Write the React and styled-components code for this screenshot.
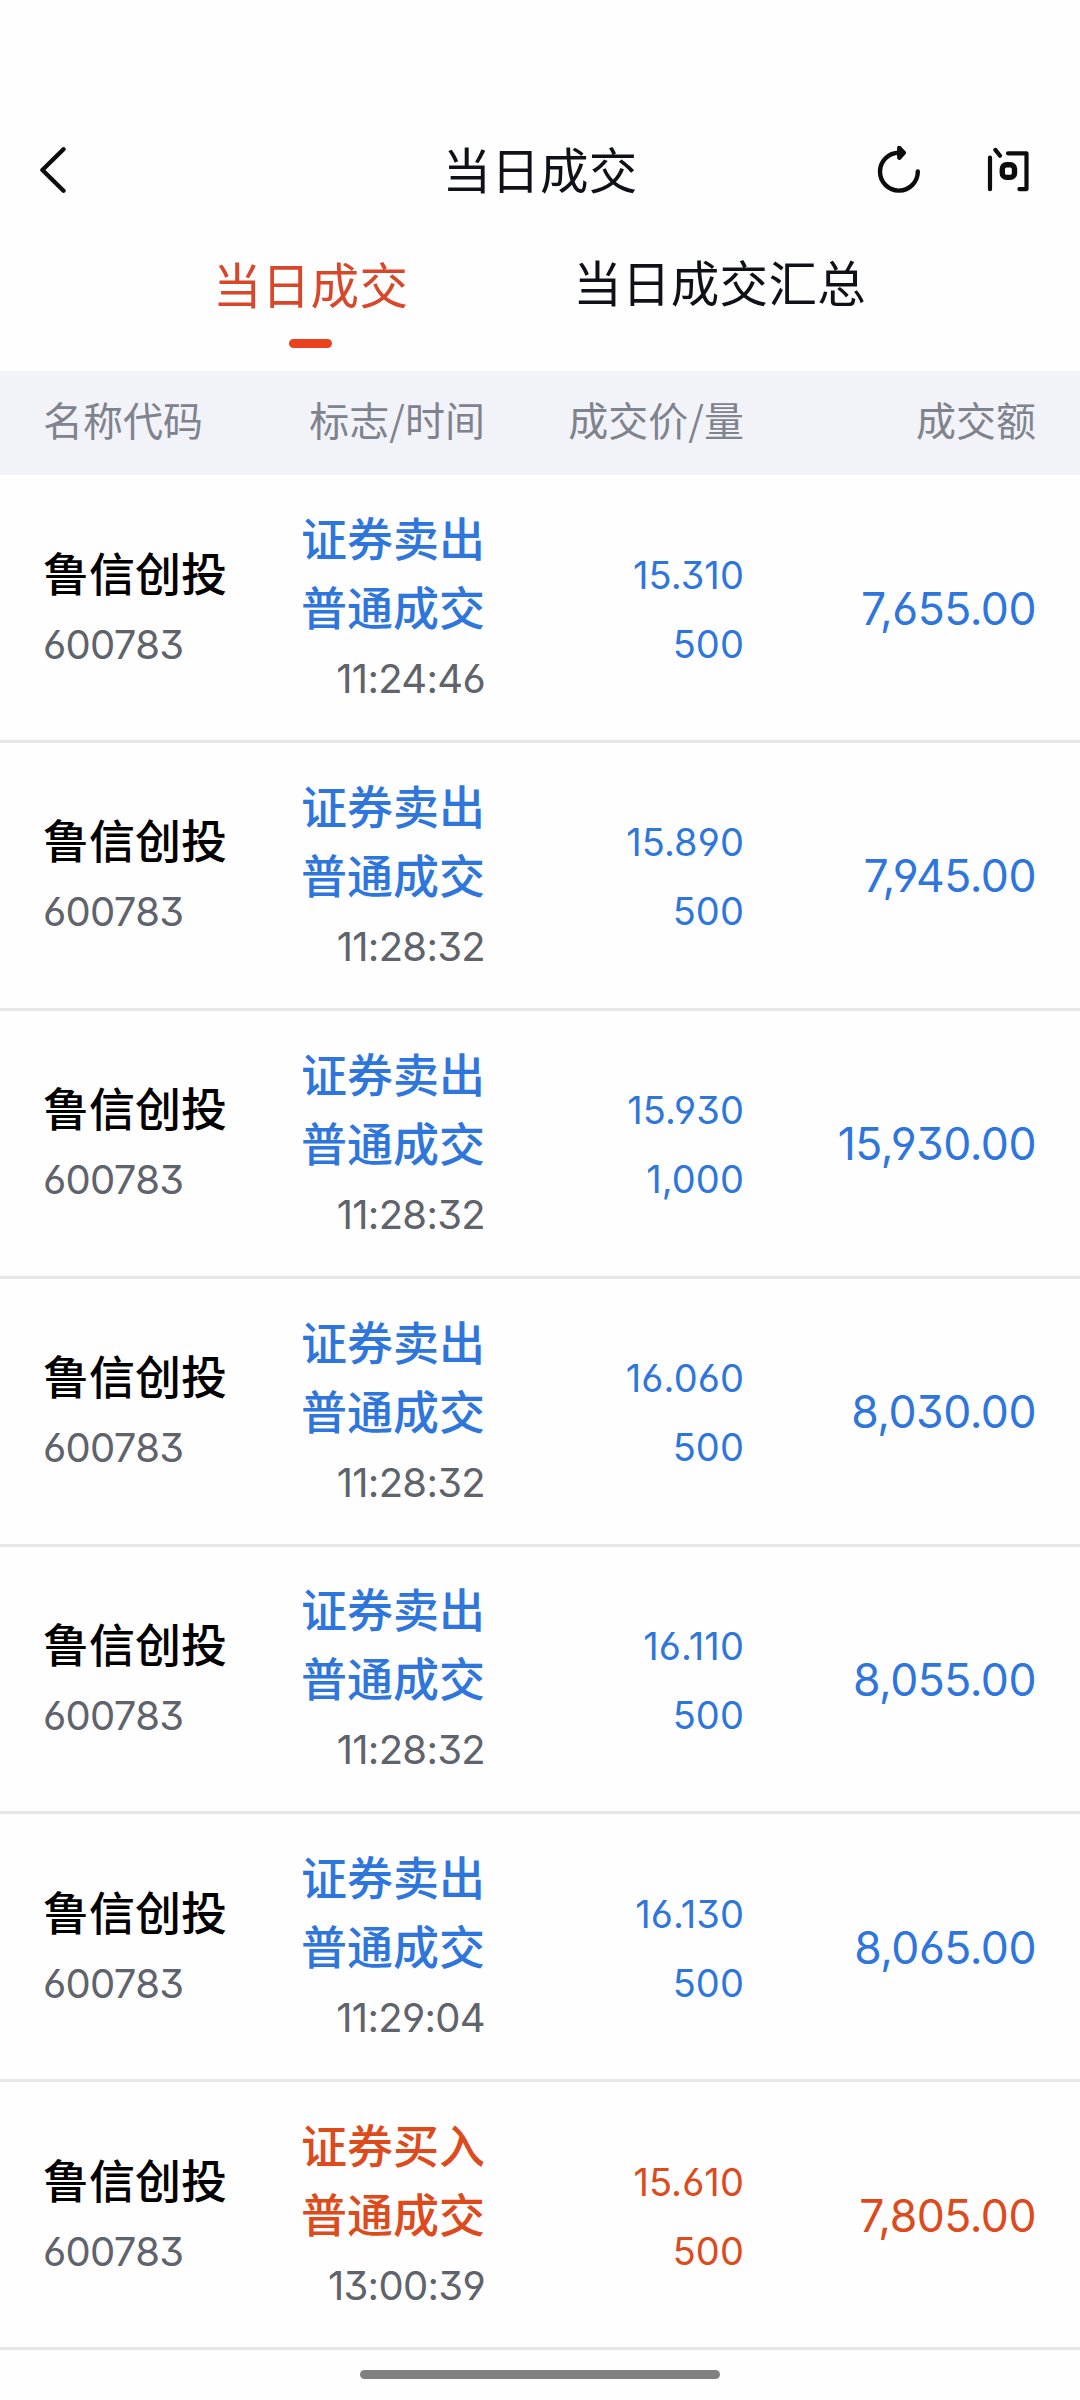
import React from 'react';
import styled, { createGlobalStyle, css } from 'styled-components';

const GlobalStyle = createGlobalStyle`
  * {
    box-sizing: border-box;
  }
  body {
    margin: 0;
    background-color: #fefefe;
    font-family: 'Noto Sans CJK SC', sans-serif;
  }
`;

const numberFont = css`
  padding-top: 4px;
  font-family: 'Inter', 'Noto Sans CJK SC', sans-serif;
  font-feature-settings: 'cv03', 'cv04', 'cv09';
`;

const Screen = styled.div`
  display: flex;
  flex-direction: column;
  width: 1080px;
  height: 2400px;
  padding-top: 100px;
  overflow: hidden;
`;

// NavBar
const NavBar = styled.header`
  display: grid;
  grid-template-columns: 240px 1fr 240px;
  align-items: center;
  height: 140px;
  padding: 0 40px;
`;
const Title = styled.h1`
  margin: 0;
  padding-bottom: 5px;
  font-size: 48.5px;
  font-weight: 400;
  line-height: 70px;
  letter-spacing: 0.3px;
  text-align: center;
  color: #101118;
`;
const IconButton = styled.button`
  display: flex;
  margin: 0;
  padding: 0;
  border: 0;
  background: none;
  cursor: pointer;
`;
const NavActions = styled.div`
  display: flex;
  justify-content: flex-end;
  gap: 64px;
  padding-right: 10px;
`;
const StrokeIcon = styled.svg`
  display: block;
  fill: none;
  stroke: #0c0c0c;
  stroke-linecap: round;
  stroke-linejoin: round;
`;

// Tabs
const Tabs = styled.nav`
  display: flex;
  height: 131px;
  padding: 8px 0 0 213px;
  gap: 165px;
`;
const Tab = styled.button`
  display: flex;
  flex-direction: column;
  align-items: center;
  margin: 0;
  padding: 0;
  border: 0;
  background: none;
  font-family: inherit;
  font-size: 48.5px;
  line-height: 66px;
  letter-spacing: 0.3px;
  color: #101118;
  cursor: pointer;
  ${props =>
    props.$active &&
    css`
      padding-top: 2px;
      color: #d9472a;
    `}
`;
const TabLine = styled.span`
  width: 43px;
  height: 9px;
  margin-top: 23px;
  border-radius: 5px;
  background-color: #ea421f;
`;

// Table
const columns = css`
  display: grid;
  grid-template-columns: 220px 222px 259px 292px;
  align-items: center;
  padding: 0 43px;
`;
const TableHead = styled.div`
  ${columns}
  flex-shrink: 0;
  height: 104.2px;
  background-color: #f2f3f8;
`;
const HeadCell = styled.span`
  padding-bottom: 9px;
  font-size: 40px;
  line-height: 58px;
  text-align: right;
  white-space: nowrap;
  color: #7f838e;
  ${props =>
    props.$left &&
    css`
      text-align: left;
    `}
`;
const Row = styled.div`
  ${columns}
  flex-shrink: 0;
  height: 267.83px;
  border-bottom: 3px solid #e6e6e6;
`;
const Cell = styled.div`
  display: flex;
  flex-direction: column;
  align-items: ${props => (props.$left ? 'flex-start' : 'flex-end')};
  line-height: 65px;
  white-space: nowrap;
  color: ${props => (props.$side === 'buy' ? '#dd4a1b' : '#2f76dc')};
`;
const StockName = styled.span`
  padding-bottom: 4px;
  font-size: 46px;
  font-weight: 500;
  color: #000;
`;
const Flag = styled.span`
  padding-bottom: 4px;
  font-size: 46px;
  font-weight: 500;
`;
const Muted = styled.span`
  ${numberFont}
  font-size: 40px;
  letter-spacing: -0.7px;
  color: #5f636c;
`;
const Price = styled.span`
  ${numberFont}
  font-size: 38px;
  letter-spacing: 0.1px;
`;
const Amount = styled.span`
  ${numberFont}
  padding-top: 3px;
  font-size: 44.5px;
  letter-spacing: -0.5px;
`;

const BottomArea = styled.footer`
  display: flex;
  justify-content: center;
  padding-top: 20px;
`;
const HomeBar = styled.div`
  width: 360px;
  height: 9px;
  border-radius: 5px;
  background-color: #808080;
`;

const trades = [
  { side: 'sell', time: '11:24:46', price: '15.310', count: '500', amount: '7,655.00' },
  { side: 'sell', time: '11:28:32', price: '15.890', count: '500', amount: '7,945.00' },
  { side: 'sell', time: '11:28:32', price: '15.930', count: '1,000', amount: '15,930.00' },
  { side: 'sell', time: '11:28:32', price: '16.060', count: '500', amount: '8,030.00' },
  { side: 'sell', time: '11:28:32', price: '16.110', count: '500', amount: '8,055.00' },
  { side: 'sell', time: '11:29:04', price: '16.130', count: '500', amount: '8,065.00' },
  { side: 'buy', time: '13:00:39', price: '15.610', count: '500', amount: '7,805.00' },
];

function BackIcon() {
  return (
    <StrokeIcon width="28" height="48" viewBox="0 0 28 48" strokeWidth="4.4">
      <path d="M23.5 3.3 2.4 24l21.1 20.7" />
    </StrokeIcon>
  );
}

function RefreshIcon() {
  return (
    <StrokeIcon width="46" height="48" viewBox="0 0 46 48" strokeWidth="4.4">
      <path d="M41.8 25.4A18.9 18.9 0 1 1 23 6.8" />
      <path d="M23.3 1.9 27.8 6.7l-4.5 5z" fill="#0c0c0c" />
    </StrokeIcon>
  );
}

function AskIcon() {
  return (
    <StrokeIcon width="44" height="48" viewBox="0 0 44 48" strokeWidth="4.2">
      <path d="M4 11.6v31.6M9.4 3.9l4.6 5.8M22 7.3h18.5v35.8h-7.1" />
      <rect x="16.3" y="18.8" width="12.2" height="12.6" rx="4.2" strokeWidth="5.4" />
    </StrokeIcon>
  );
}

function TradeRow({ trade }) {
  return (
    <Row>
      <Cell $left>
        <StockName>鲁信创投</StockName>
        <Muted>600783</Muted>
      </Cell>
      <Cell $side={trade.side}>
        <Flag>{trade.side === 'buy' ? '证券买入' : '证券卖出'}</Flag>
        <Flag>普通成交</Flag>
        <Muted>{trade.time}</Muted>
      </Cell>
      <Cell $side={trade.side}>
        <Price>{trade.price}</Price>
        <Price>{trade.count}</Price>
      </Cell>
      <Cell $side={trade.side}>
        <Amount>{trade.amount}</Amount>
      </Cell>
    </Row>
  );
}

function App() {
  return (
    <>
      <GlobalStyle />
      <Screen>
        <NavBar>
          <IconButton aria-label="返回">
            <BackIcon />
          </IconButton>
          <Title>当日成交</Title>
          <NavActions>
            <IconButton aria-label="刷新">
              <RefreshIcon />
            </IconButton>
            <IconButton aria-label="问">
              <AskIcon />
            </IconButton>
          </NavActions>
        </NavBar>
        <Tabs>
          <Tab $active>
            当日成交
            <TabLine />
          </Tab>
          <Tab>当日成交汇总</Tab>
        </Tabs>
        <TableHead>
          <HeadCell $left>名称代码</HeadCell>
          <HeadCell>标志/时间</HeadCell>
          <HeadCell>成交价/量</HeadCell>
          <HeadCell>成交额</HeadCell>
        </TableHead>
        {trades.map((trade, index) => (
          <TradeRow key={index} trade={trade} />
        ))}
        <BottomArea>
          <HomeBar />
        </BottomArea>
      </Screen>
    </>
  );
}

export default App;
